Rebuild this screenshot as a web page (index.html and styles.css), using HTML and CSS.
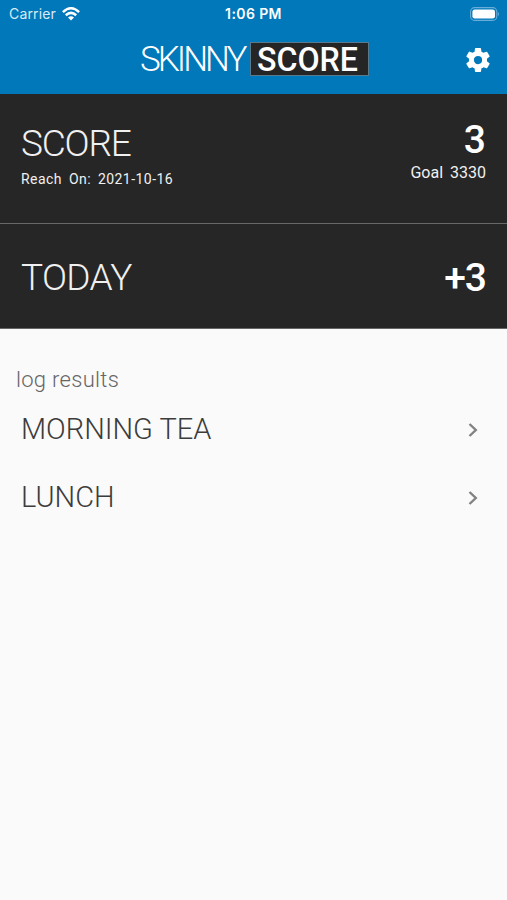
FILE: index.html
```html
<!DOCTYPE html>
<html lang="en">
<head>
<meta charset="utf-8">
<title>Skinny Score</title>
<link rel="stylesheet" href="styles.css">
</head>
<body>
<header>
  <div class="status">
    <div class="carrier"><span>Carrier</span>
      <svg width="18" height="14" viewBox="0 0 18 14" fill="none" stroke="#fff" stroke-width="2.5"><path d="M.9 5.1Q9-2.5 17.1 5.1M3.8 8.2Q9 3.5 14.2 8.2"/><path d="M9 13.6 6 10.6Q9 8 12 10.6Z" fill="#fff" stroke="none"/></svg>
    </div>
    <div class="time">1:06 PM</div>
    <svg class="battery" width="31" height="14" viewBox="0 0 31 14"><rect x="1.6" y=".6" width="26.2" height="12.8" rx="4" fill="none" stroke="#69add8" stroke-width="1.1"/><rect x="3.4" y="2.4" width="22.6" height="9.2" rx="2.3" fill="#fff"/><path d="M28.9 4.7Q31 7 28.9 9.3Z" fill="#69add8"/></svg>
  </div>
  <div class="nav">
    <div class="logo"><span class="skinny">SKINNY</span><span class="badge"><span>SCORE</span></span></div>
    <svg class="gear" width="30" height="30" viewBox="0 0 24 24" fill="#fff"><path d="M19.14 12.94c.04-.3.06-.61.06-.94 0-.32-.02-.64-.07-.94l2.03-1.58c.18-.14.23-.41.12-.61l-1.92-3.32c-.12-.22-.37-.29-.59-.22l-2.39.96c-.5-.38-1.03-.7-1.62-.94l-.36-2.54c-.04-.24-.24-.41-.48-.41h-3.84c-.24 0-.43.17-.47.41l-.36 2.54c-.59.24-1.13.57-1.62.94l-2.39-.96c-.22-.08-.47 0-.59.22L2.74 8.87c-.12.21-.08.47.12.61l2.03 1.58c-.05.3-.09.63-.09.94s.02.64.07.94l-2.03 1.58c-.18.14-.23.41-.12.61l1.92 3.32c.12.22.37.29.59.22l2.39-.96c.5.38 1.03.7 1.62.94l.36 2.54c.05.24.24.41.48.41h3.84c.24 0 .44-.17.47-.41l.36-2.54c.59-.24 1.13-.56 1.62-.94l2.39.96c.22.08.47 0 .59-.22l1.92-3.32c.12-.22.07-.47-.12-.61zM12 15.3A3.3 3.3 0 1 1 12 8.7a3.3 3.3 0 0 1 0 6.6z"/></svg>
  </div>
</header>
<section class="panel score">
  <div><h1 class="t-score">SCORE</h1><p class="reach">Reach On: 2021-10-16</p></div>
  <div class="right"><div class="value">3</div><p class="goal">Goal 3330</p></div>
</section>
<section class="panel today">
  <h1 class="t-today">TODAY</h1>
  <div class="value plus">+3</div>
</section>
<main>
  <h2>log results</h2>
  <div class="row"><span>MORNING TEA</span><svg width="10" height="16" viewBox="0 0 10 16"><path d="M1.5 2 7.8 8l-6.3 6" fill="none" stroke="#828282" stroke-width="2.4"/></svg></div>
  <div class="row"><span>LUNCH</span><svg width="10" height="16" viewBox="0 0 10 16"><path d="M1.5 2 7.8 8l-6.3 6" fill="none" stroke="#828282" stroke-width="2.4"/></svg></div>
</main>
</body>
</html>
```
FILE: styles.css
```css
* { box-sizing: border-box; margin: 0; padding: 0; }
body { width: 507px; height: 900px; background: #fafafa; font-family: Roboto, "Open Sans", sans-serif; overflow: hidden; }
svg { display: block; flex: none; }
span { white-space: nowrap; }
header { height: 94px; background: #0078ba; color: #fff; }
.status { height: 27px; display: grid; grid-template-columns: 1fr auto 1fr; align-items: center; padding: 0 7px 0 9px; font-family: Inter, sans-serif; font-size: 14px; }
.carrier { display: flex; align-items: center; gap: 6px; letter-spacing: .15px; color: #d9ebf6; }
.time { font-weight: 600; font-size: 14px; letter-spacing: .4px; margin-right: 2px; }
.battery { justify-self: end; }
.nav { height: 67px; display: flex; padding: 15px 14px 0 140px; }
.logo { display: flex; height: 34px; width: 229px; }
.skinny { width: 110px; font-size: 35px; line-height: 36px; font-weight: 300; letter-spacing: -3px; }
.badge { width: 119px; height: 34px; background: #252525; border: 1px solid #59798c; padding-left: 6px; font-size: 34px; line-height: 33px; font-weight: 500; }
.badge span { display: inline-block; transform-origin: left center; transform: scaleX(.945); }
.gear { margin: 3px 0 0 auto; }
.panel { background: #262626; color: #f0f0f0; display: flex; justify-content: space-between; padding: 0 21px; }
.score { height: 130px; border-bottom: 1px solid #686868; padding-top: 29px; }
.today { height: 105px; align-items: center; border-bottom: 1px solid #666; padding-top: 4px; }
h1 { font-size: 37px; line-height: 42px; font-weight: 300; }
.t-score { letter-spacing: -1.2px; }
.t-today { letter-spacing: -.7px; }
.reach { font-size: 14px; line-height: 18px; margin-top: 5px; letter-spacing: .45px; word-spacing: 3px; }
.right { text-align: right; margin-top: -1px; }
.value { font-size: 39px; line-height: 36px; font-weight: 500; color: #fff; }
.plus { letter-spacing: -1px; }
.goal { font-size: 16px; line-height: 20px; margin-top: 5px; word-spacing: 3px; }
main { padding: 37px 29px 0 16px; color: #3c3c3c; }
h2 { font-size: 22px; line-height: 28px; font-weight: 300; letter-spacing: .3px; color: #666; }
.row { height: 68px; display: flex; align-items: center; justify-content: space-between; padding: 1px 0 0 5px; font-size: 29px; font-weight: 300; }
.row svg { margin-top: 2px; }
```
